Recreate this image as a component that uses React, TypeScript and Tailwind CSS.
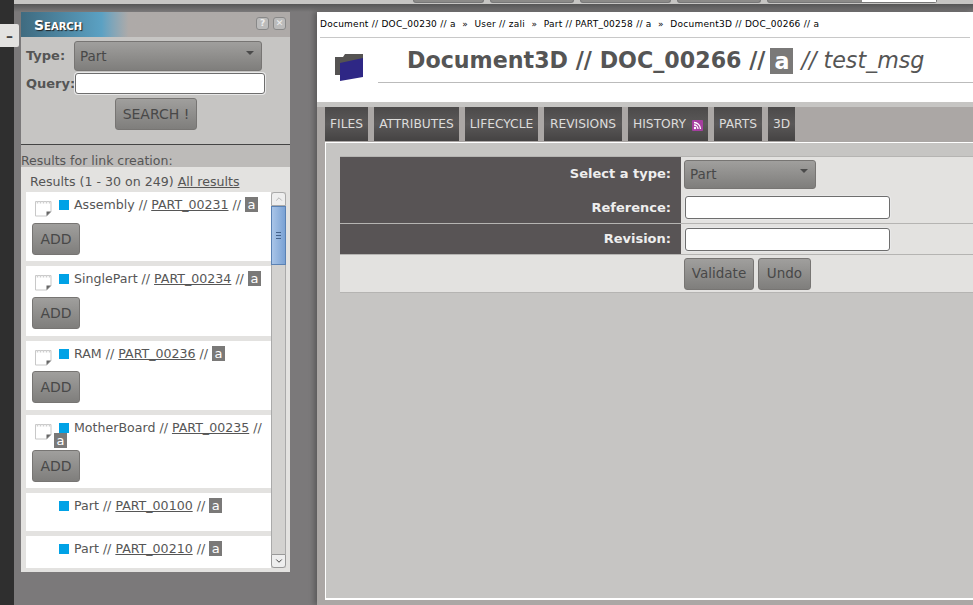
import React from 'react';
import { ChevronUp, ChevronDown } from 'lucide-react';

const results = [
  { type: 'Assembly', ref: 'PART_00231', icon: true, h: 'h-[69px]', addClass: 'mt-[6px]' },
  { type: 'SinglePart', ref: 'PART_00234', icon: true, h: 'h-[70px]', addClass: 'mt-[6px]' },
  { type: 'RAM', ref: 'PART_00236', icon: true, h: 'h-[69px]', addClass: 'mt-[5px]' },
  { type: 'MotherBoard', ref: 'PART_00235', icon: true, h: 'h-[73px]', addClass: 'mt-[10px]', wrap: true },
  { type: 'Part', ref: 'PART_00100', icon: false, h: 'h-[38px]' },
  { type: 'Part', ref: 'PART_00210', icon: false, h: 'h-[33px]' },
];

const tabs = [
  { label: 'FILES', w: 'w-[43px]' },
  { label: 'ATTRIBUTES', w: 'w-[85px]' },
  { label: 'LIFECYCLE', w: 'w-[73px]' },
  { label: 'REVISIONS', w: 'w-[78px]' },
  { label: 'HISTORY', w: 'w-[80px]' },
  { label: 'PARTS', w: 'w-[48px]' },
  { label: '3D', w: 'w-[27px]' },
];
const crumbs = ['Document // DOC_00230 // a', 'User // zali', 'Part // PART_00258 // a', 'Document3D // DOC_00266 // a'];

const btn =
  'rounded-[3px] border border-[#777573] bg-gradient-to-b from-[#a09f9d] to-[#7f7e7c] text-[#484848] flex items-center justify-center';

const NoteIcon = () => (
  <svg width="17" height="17" viewBox="0 0 17 17" className="shrink-0">
    <path d="M0.500 1.500h15.500v10.500l-4 4h-11.500z" fill="#fff" stroke="#c8c8c8" />
    <path d="M2.500 1v2.500M5.500 1v2.500M8.500 1v2.500M11.500 1v2.500M14.500 1v2.500" stroke="#cfcfcf" strokeWidth="1.500" />
    <path d="M11.500 16v-4.500h4.500z" fill="#666" />
  </svg>
);

const FolderIcon = () => (
  <svg width="32" height="30" viewBox="0 0 32 30">
    <path d="M1 4h8l2-3h18v21H1z" fill="#555352" />
    <path d="M6 10L29 5v19L6 28z" fill="#2e2785" />
  </svg>
);

const RssIcon = () => (
  <svg width="11" height="11" viewBox="0 0 11 11" className="ml-[6px] mt-[2px]">
    <rect width="11" height="11" rx="1" fill="#a63fa0" />
    <circle cx="3" cy="8" r="1.200" fill="#fff" />
    <path d="M2 5a4 4 0 0 1 4 4M2 2.500a6.500 6.500 0 0 1 6.500 6.500" stroke="#fff" strokeWidth="1.300" fill="none" />
  </svg>
);

const Badge = () => (
  <span className="inline-block h-[15px] w-[13px] bg-[#7a7978] text-center text-[13px] leading-[15px] text-white">a</span>
);

const DropDown = ({ className }: { className: string }) => (
  <div className={`${btn} ${className} !justify-between pl-[5px] pr-[7px] text-[13.500px]`}>
    <span>Part</span>
    <span className="mb-[6px] h-0 w-0 border-x-[4px] border-t-[4px] border-x-transparent border-t-[#4a4a4a]" />
  </div>
);

const TextInput = ({ className }: { className: string }) => (
  <div className={`rounded-[3px] border border-[#6e6e6e] bg-white shadow-[0_0_0_1px_#e8e8e8] ${className}`} />
);

function ResultRow({ item }: { item: (typeof results)[number] }) {
  return (
    <div className={`${item.h} shrink-0 overflow-hidden bg-white`}>
      <div className="relative flex items-start pl-[9px] pt-[5px]">
        <div className="mt-[3px] w-[18px]">{item.icon && <NoteIcon />}</div>
        <span className="ml-[6px] mt-[3px] h-[10px] w-[10px] shrink-0 bg-[#00a2e6]" />
        <span className="ml-[5px] whitespace-nowrap text-[12.600px] leading-[16px] text-[#565656]">
          {item.type} // <span className="underline">{item.ref}</span> //{item.wrap ? '' : ' '}
          {!item.wrap && <Badge />}
        </span>
        {item.wrap && (
          <span className="absolute left-[28px] top-[13px]">
            <Badge />
          </span>
        )}
      </div>
      {item.addClass && <div className={`${btn} ml-[6px] ${item.addClass} h-[32px] w-[48px] text-[14px]`}>ADD</div>}
    </div>
  );
}

export default function App() {
  return (
    <div className="relative flex h-[605px] w-[973px] overflow-hidden bg-[#7b797a] font-['DejaVu_Sans',sans-serif]">
      <div className="w-[14px] shrink-0 bg-[#2f2f2f]" />
      <div className="absolute left-0 top-[24px] flex h-[23px] w-[19px] items-center justify-center rounded-r-[2px] bg-[#e3e2e0] text-[14px] font-bold leading-none text-[#444]">
        –
      </div>

      <div className="flex min-w-0 flex-1 flex-col">
        {/* top menu remains */}
        <div className="flex h-[4px] shrink-0 justify-end gap-[6px] bg-[#c6c5c3] pr-[36px]">
          <div className="h-[3px] w-[71px] rounded-b-[3px] border-x border-b border-[#777] bg-[#8c8b89]" />
          <div className="h-[3px] w-[84px] rounded-b-[3px] border-x border-b border-[#777] bg-[#8c8b89]" />
          <div className="h-[3px] w-[91px] rounded-b-[3px] border-x border-b border-[#777] bg-[#8c8b89]" />
          <div className="h-[3px] w-[84px] rounded-b-[3px] border-x border-b border-[#777] bg-[#8c8b89]" />
          <div className="flex h-[3px] w-[170px] rounded-b-[3px] border-x border-b border-[#777] bg-[#8c8b89]">
            <div className="ml-auto w-[74px] bg-white" />
          </div>
        </div>
        <div className="h-[8px] shrink-0 bg-gradient-to-b from-[#555] to-[#7b797a]" />

        <div className="flex min-h-0 flex-1">
          {/* search panel */}
          <div className="ml-[7px] flex h-[560px] w-[269px] shrink-0 flex-col bg-[#c6c5c3]">
            <div className="flex h-[25px] shrink-0 items-center justify-between bg-gradient-to-r from-[#3f6b80] via-[#5ba1c3] via-[30%] to-[#aeaaa8] to-[40%] pl-[13px] pr-[4px]">
              <span className="text-[14px] font-bold leading-none text-white [font-variant:small-caps] [text-shadow:1px_1px_1px_#222]">
                Search
              </span>
              <div className="flex gap-[4px] pb-[2px]">
                <div className="flex h-[13px] w-[13px] items-center justify-center rounded-[3px] border border-[#888] bg-[#bbb] text-[9px] font-bold text-[#eee]">?</div>
                <div className="flex h-[13px] w-[13px] items-center justify-center rounded-[3px] border border-[#888] bg-[#bbb] text-[9px] font-bold text-[#eee]">✕</div>
              </div>
            </div>

            <div className="h-[108px] shrink-0 border-b border-[#444] px-[5px] pt-[4px]">
              <div className="flex items-center">
                <span className="w-[48px] text-[13px] font-bold text-[#555]">Type:</span>
                <DropDown className="h-[30px] w-[188px]" />
              </div>
              <div className="mt-[2px] flex items-center">
                <span className="w-[49px] text-[13px] font-bold text-[#555]">Query:</span>
                <TextInput className="h-[21px] w-[190px]" />
              </div>
              <div className={`${btn} ml-[89px] mt-[4px] h-[32px] w-[82px] text-[14px]`}>SEARCH !</div>
            </div>

            <div className="h-[22px] shrink-0 bg-[#bdbbb9] text-[12.500px] leading-[32px] text-[#555]">Results for link creation:</div>

            <div className="min-h-0 flex-1 bg-[#e3e2e0] pb-[4px]">
              <div className="h-[25px] pl-[9px] text-[12.600px] leading-[29px] text-[#555]">
                Results (1 - 30 on 249) <span className="underline">All results</span>
              </div>
              <div className="ml-[5px] flex h-[376px] w-[260px]">
                <div className="flex w-[245px] flex-col gap-[5px] overflow-hidden">
                  {results.map((item) => (
                    <ResultRow key={item.ref} item={item} />
                  ))}
                </div>
                {/* scrollbar */}
                <div className="flex w-[15px] flex-col bg-[#d3d2d0]">
                  <div className="flex h-[14px] items-center justify-center rounded-t-[3px] border border-[#aaa] bg-[#eee]">
                    <ChevronUp size={10} className="text-[#aaa]" />
                  </div>
                  <div className="flex h-[59px] flex-col items-center justify-center gap-[2px] border border-[#5b82b4] bg-gradient-to-r from-[#a9c5e8] to-[#7ba2d4]">
                    <div className="h-px w-[5px] bg-[#44628c]" />
                    <div className="h-px w-[5px] bg-[#44628c]" />
                    <div className="h-px w-[5px] bg-[#44628c]" />
                  </div>
                  <div className="flex-1 border-x border-[#aaa]" />
                  <div className="flex h-[14px] items-center justify-center rounded-b-[3px] border border-[#999] bg-[#eee]">
                    <ChevronDown size={10} className="text-[#222]" />
                  </div>
                </div>
              </div>
            </div>
          </div>

          {/* main column */}
          <div className="ml-[27px] flex min-w-0 flex-1 flex-col bg-[#aba7a5] shadow-[-3px_0_5px_rgba(0,0,0,0.25)]">
            <div className="h-[90px] shrink-0 bg-white">
              <div className="mx-[3px] flex h-[26px] items-center border-b border-[#c8c8c8] text-[9px] tracking-[0.25px] text-black">
                {crumbs.map((c, i) => (
                  <span key={c} className="whitespace-nowrap">
                    {i > 0 && <span className="mx-[6.500px]">»</span>}
                    {c}
                  </span>
                ))}
              </div>
              <div className="flex pl-[17px]">
                <div className="mt-[15px] w-[44px] shrink-0">
                  <FolderIcon />
                </div>
                <div className="flex h-[45px] flex-1 items-center border-b border-[#bbb] pl-[29px] pt-[2px] text-[22.200px] text-[#555]">
                  <span className="whitespace-pre font-bold">Document3D // DOC_00266 //</span>
                  <span className="ml-[5px] mr-[8px] inline-block h-[26px] w-[23px] bg-[#7a7978] text-center font-bold leading-[26px] text-white">a</span>
                  <span className="whitespace-nowrap italic">// test_msg</span>
                </div>
              </div>
            </div>
            <div className="h-[5px] shrink-0 bg-[#c6c5c3]" />

            <div className="flex h-[35px] shrink-0 gap-[6px] pl-[8px]">
              {tabs.map((t) => (
                <div
                  key={t.label}
                  className={`flex h-[34px] ${t.w} items-center justify-center whitespace-nowrap bg-gradient-to-b from-[#4c4a4a] via-[#5a5858] to-[#454343] text-[12.250px] text-[#dddcdb]`}
                >
                  {t.label}
                  {t.label === 'HISTORY' && <RssIcon />}
                </div>
              ))}
            </div>

            <div className="mb-[5px] ml-[8px] min-h-0 flex-1 border-b-2 border-l border-t border-white bg-[#c6c5c3] pl-[14px] pt-[13px]">
              <div className="border-y border-[#b5b4b2] bg-[#e3e2e0]">
                <div className="flex h-[34px]">
                  <div className="flex w-[341px] items-center justify-end bg-[#585455] pr-[10px] text-[13px] font-bold text-[#eee]">Select a type:</div>
                  <div className="flex items-center pl-[3px]">
                    <DropDown className="h-[29px] w-[132px]" />
                  </div>
                </div>
                <div className="flex h-[33px] border-b border-[#b5b4b2]">
                  <div className="flex w-[341px] items-center justify-end bg-[#585455] pr-[10px] pt-[2px] text-[13px] font-bold text-[#eee]">Reference:</div>
                  <div className="flex items-center pl-[4px]">
                    <TextInput className="h-[23px] w-[205px]" />
                  </div>
                </div>
                <div className="flex h-[31px] border-b border-[#b5b4b2]">
                  <div className="flex w-[341px] items-center justify-end bg-[#585455] pr-[10px] text-[13px] font-bold text-[#eee]">Revision:</div>
                  <div className="flex items-center pl-[4px]">
                    <TextInput className="h-[23px] w-[205px]" />
                  </div>
                </div>
                <div className="flex h-[37px] items-center gap-[4px] pl-[344px]">
                  <div className={`${btn} h-[32px] w-[70px] text-[13.500px]`}>Validate</div>
                  <div className={`${btn} h-[32px] w-[53px] text-[13.500px]`}>Undo</div>
                </div>
              </div>
            </div>
          </div>
        </div>
      </div>
    </div>
  );
}
